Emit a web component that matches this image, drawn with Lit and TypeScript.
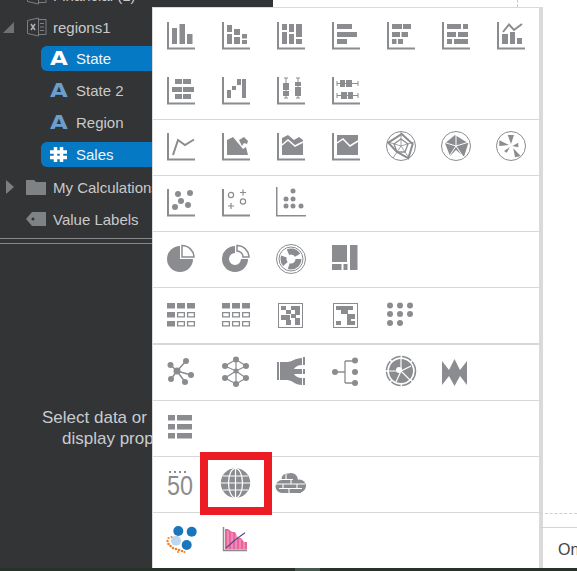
import { LitElement, html, css, svg, nothing } from 'lit';
import { customElement } from 'lit/decorators.js';

const GRAY = '#8a8c8f';

// x, y, w, h quadruples into a single path
const boxes = (...r: number[][]) => r.map(([x, y, w, h]) => `M${x} ${y}h${w}v${h}h${-w}z`).join('');
const axis = 'M0 0h2v25.5h26v2H0z';
const chart = (...r: number[][]) => svg`<path d="${axis + boxes(...r)}"/>`;
const dots = (...c: number[][]) => c.map(([x, y, r]) => svg`<circle cx="${x}" cy="${y}" r="${r}"/>`);
const line = (d: string, w = 2, color = GRAY) => svg`<path d="${d}" fill="none" stroke="${color}" stroke-width="${w}"/>`;

const SECTIONS = [
  [
    chart([5, 6, 5, 16], [12.5, 2, 5.5, 20], [20, 12, 5.5, 10]),
    chart([5, 3, 5, 7], [5, 12, 5, 10], [12, 7, 6, 6], [12, 15, 6, 7], [20, 12, 5, 4.5], [20, 18, 5, 4]),
    chart([5, 2, 5, 6], [5, 10, 5, 12], [12, 2, 5, 8], [12, 12, 5, 10], [19, 2, 6, 13], [19, 17, 6, 5]),
    chart([5, 2, 15, 5], [5, 10, 20, 5], [5, 17, 10, 5]),
    chart([5, 2, 10, 5], [16, 2, 8, 5], [5, 10, 8, 5], [14.5, 10, 6.5, 5], [5, 17, 4.5, 5], [11, 17, 5, 5]),
    chart([5, 2, 14, 5], [21, 2, 5, 5], [5, 10, 9, 5], [16, 10, 10, 5], [5, 17, 5, 5], [12, 17, 14, 5]),
    svg`${chart([5, 12, 6, 10], [13, 10, 5, 12], [20, 16, 5, 6])}${line('M6 10 12 2.5 17 8 25 2')}`,
    chart([8, 2, 7, 5], [16, 2, 8, 5], [5, 10, 10, 5], [16, 10, 11, 5], [8, 17, 7, 5], [16, 17, 8, 5]),
    chart([5, 13, 4, 8], [10, 9, 4, 4], [15, 2, 4, 6], [20, 2, 4, 19]),
    svg`${chart([6, 6, 6, 7], [6, 14, 6, 5], [18, 5, 6, 4], [18, 10, 6, 9])}
      ${line('M9 1v20M7 1h4M7 21h4M21 1v20M19 1h4M19 21h4', 1)}`,
    svg`${chart([8, 3, 5, 7], [14, 3, 6, 7], [9, 15, 6, 7], [16, 15, 5, 7])}
      ${line('M5 6.5h21M5 4v5M26 4v5M5 18.5h21M5 16v5M26 16v5', 1)}`,
  ],
  [
    svg`<path d="${axis}"/>${line('M6 22 11 7 18 12 27 6.5')}`,
    svg`<path d="${axis}"/><path d="M5 22V7l6-3 5 6 5 6 3-2 2 8z"/><path d="M17 7l5-3 4 4-1 3-3-1-2 3z"/>`,
    svg`<path d="${axis}"/><path d="M5 22V5l6-3 6 5 5-3 4 3v15z"/>${line('M5 12 11 7 18 13 26 9', 1.5, '#fff')}`,
    svg`<path d="${axis + boxes([5, 2, 21, 20])}"/>${line('M5 10 11 6 18 13 26 8', 1.5, '#fff')}`,
    svg`<circle cx="14" cy="13" r="14.5" fill="none" stroke="${GRAY}"/>
      ${line('M14 -1V13M14 13 1 9M14 13 27 9M14 13 6 25M14 13 22 25', .8)}
      <path d="M1.300 9.700 14.700 1 25.700 11 21.300 25.300 9.700 18.700z" fill="none" stroke="${GRAY}" stroke-width="2"/>
      <path d="M14 6 21 11 18 19 10 19 7 11z" fill="none" stroke="${GRAY}" stroke-width="1.300"/>`,
    svg`<circle cx="14" cy="13" r="14.5" fill="none" stroke="${GRAY}"/>
      <path d="M13 2 26.300 10.300 22 23.700 14 17 8 23 3 10.300z"/>
      ${line('M14 -1V13M14 13 1 9M14 13 27 9M14 13 6 25M14 13 22 25', 1, '#fff')}`,
    svg`<circle cx="14" cy="13" r="14.5" fill="none" stroke="${GRAY}"/>
      <path d="M10.700 2H17L14 11zM2.300 7.300V13L12 12zM21.300 9.700V14.300L15.300 13zM7 18 9.700 19.700 13 14zM16.300 15.300 23.700 23 18 24.300z"/>`,
  ],
  [
    svg`<path d="${axis}"/><g transform="translate(0,-1)">${dots([11, 6, 3], [23, 5, 3], [14, 13, 3], [21, 17, 3], [8, 19, 3])}</g>`,
    svg`<path d="${axis}"/><g transform="translate(0,-1)" fill="none" stroke="${GRAY}" stroke-width="1.2">
      <circle cx="9" cy="7" r="2.6"/><circle cx="21" cy="13.5" r="2.6"/>
      <path d="M21 1.5v6M18 4.5h6M9 15v6M6 18h6"/></g>`,
    svg`<g transform="translate(-1,-2)"><path d="M0 0h1.5v28H30v1.5H0z"/>
      ${dots([17, 4, 2.5], [10, 12, 2.5], [17, 12, 2.5], [10, 19, 2.5], [17, 19, 2.5], [25, 19, 2.5])}</g>`,
  ],
  [
    svg`<path d="M13 1A13 13 0 1 0 26 14H13z"/><path d="M15 .5A12 12 0 0 1 27 12H15z" fill="#fff" stroke="${GRAY}" stroke-width="1.5"/>`,
    svg`<path d="M13 1A13 13 0 1 0 26 14H19A6 6 0 1 1 13 8z"/>
      <path d="M15 .5A12 12 0 0 1 27 12H21A6 6 0 0 0 15 6z" fill="#fff" stroke="${GRAY}" stroke-width="1.5"/>`,
    svg`<g transform="translate(-1,0)"><circle cx="15" cy="14" r="14.5" fill="none" stroke="${GRAY}"/>
      <circle cx="15" cy="14" r="12" fill="none" stroke="${GRAY}"/>
      <circle cx="15" cy="14" r="7.5" fill="none" stroke="${GRAY}" stroke-width="6" stroke-dasharray="14 4 8 6 11 4"/></g>`,
    svg`<path d="${boxes([0, 0, 15, 17], [18, 0, 7.5, 25], [0, 19, 9.5, 6], [11.5, 19, 4, 6])}"/>`,
  ],
  [
    svg`<path d="${boxes([0, 2, 8, 5.5], [10, 2, 8, 5.5], [20, 2, 8, 5.5], [0, 11, 8, 5.5], [0, 20, 8, 5.5])}"/>
      <path d="${boxes([10.6, 11.6, 6.8, 4.3], [20.6, 11.6, 6.8, 4.3], [10.6, 20.6, 6.8, 4.3], [20.6, 20.6, 6.8, 4.3])}" fill="none" stroke="${GRAY}" stroke-width="1.3"/>`,
    svg`<path d="${boxes([0, 2, 8, 5.5], [10, 2, 8, 5.5], [20, 2, 8, 5.5])}"/>
      <path d="${boxes([.6, 11.6, 6.8, 4.3], [10.6, 11.6, 6.8, 4.3], [20.6, 11.6, 6.8, 4.3], [.6, 20.6, 6.8, 4.3], [10.6, 20.6, 6.8, 4.3], [20.6, 20.6, 6.8, 4.3])}" fill="none" stroke="${GRAY}" stroke-width="1.3"/>`,
    svg`<rect x="1.5" y="2.5" width="24" height="24" fill="none" stroke="${GRAY}"/>
      <path d="${boxes([4, 5, 5, 4], [14, 5, 9, 4], [9, 9, 5, 4], [18, 9, 5, 5], [14, 13, 5, 4], [4, 14, 9, 5], [9, 19, 5, 5], [18, 17, 5, 7])}"/>`,
    svg`<rect x="1.5" y="2.5" width="24" height="24" fill="none" stroke="${GRAY}"/>
      <path d="${boxes([4, 5, 17, 4], [9, 9, 7, 4], [15, 13, 8, 5], [15, 18, 4, 6], [4, 20, 5, 4], [19, 20, 4, 4])}"/>`,
    svg`<g transform="translate(0,2)">${dots([3, 2.5, 3], [13, 2.5, 3], [23, 2.5, 3], [3, 11, 3], [13, 11, 3], [23, 11, 3], [3, 20, 3], [13, 20, 3])}</g>`,
  ],
  [
    svg`<g transform="translate(0,-1)">${line('M10 14 3.5 8M10 14 19 4M10 14 24 18M10 14 18 25M10 14 4 22', 1.5)}
      ${dots([10, 14, 3.5], [3.5, 8, 3], [19, 4, 3], [24, 18, 3], [18, 25, 3], [4, 22, 3])}</g>`,
    svg`<g transform="translate(0,-1)">${line('M14 14 14 2.5 24 9 14 14 24 21 14 27M14 14 14 27 3 21 14 14 3 9 14 2.5', 1.2)}
      ${dots([14, 14, 2.5], [14, 2.5, 3], [24, 9, 3], [24, 21, 3], [14, 27, 3], [3, 21, 3], [3, 9, 3])}</g>`,
    svg`<g transform="translate(0,-1)"><path d="${boxes([0, 5, 2, 18], [26, 0, 2, 8], [26, 12, 2, 5], [26, 21, 2, 7])}"/>
      <path d="M3 5H10C15 5 18 1 25 1V8C21 8 18 10 17 12L25 12V17L17 17C18 19 21 21 25 21V28C18 28 15 23 10 23H3Z"/></g>`,
    svg`${line('M3 14H13M13 3V25M13 3H23M13 25H23', 1.3)}${dots([3, 14, 3], [23, 2.5, 3], [23, 14, 3], [23, 25, 3])}`,
    svg`<g transform="translate(-1,-1)"><circle cx="15" cy="14" r="14.5" fill="none" stroke="${GRAY}" stroke-width="1.5" stroke-dasharray="10 1.500"/>
      <circle cx="15" cy="14" r="12"/>
      ${line('M15 2V14L25 9M15 14 24 23M15 14 3 14M10 25 15 14', 1.2, '#fff')}
      <circle cx="13" cy="13" r="3" fill="#fff"/></g>`,
    svg`<path d="M0 3 7 12 12.5 1 18 12 25 3V27L18 18 12.5 28 7 18 0 27z"/>`,
  ],
  [
    svg`<path d="${boxes([1, 1, 7, 5.5], [10, 1, 15, 5.5], [1, 10, 7, 5.5], [10, 10, 15, 5.5], [1, 19, 7, 5.5], [10, 19, 15, 5.5])}"/>`,
  ],
  [
    svg`<path d="${boxes([2, 1, 2, 2], [7, 1, 2, 2], [12, 1, 2, 2], [17, 1, 2, 2])}"/>
      <text class="big" x="0" y="25" textLength="26" lengthAdjust="spacingAndGlyphs">50</text>`,
    svg`<circle cx="13.500" cy="13" r="14.700"/>
      <g fill="none" stroke="#fff" stroke-width="1.2">
        <ellipse cx="13.500" cy="13" rx="7" ry="14.700"/><path d="M13.500 -2V28M-1.500 13H28.500M1 6H26M1 20H26"/>
      </g>`,
    svg`<g>${dots([5, 16.500, 6.500], [14, 10, 7], [10, 9, 5.500], [22.500, 16, 6.500])}</g>
      <rect x="4" y="12" width="20" height="11"/>
      ${line('M4 9.500H16M-1 14H28M2 18.500H25M9 4V9.500M14 9.500V14M6 14V18.500M20 14V18.500M12 18.500V23', 1.100, '#fff')}`,
  ],
  [
    svg`<g fill="#1b75bb">${dots([11.300, 5, 5], [24.700, 5.700, 5], [19.700, 19, 5])}</g>
      <circle cx="9" cy="14.700" r="5" fill="#bcd7ee"/>
      <g fill="#f58220">${dots([1.500, 12, 1.100], [.5, 15, 1.200], [1.500, 18, 1.300], [3.500, 20, 1.300], [6, 22, 1.300], [9, 23, 1.300], [12, 24, 1.300], [15, 25, 1.300], [17.500, 26, 1.100], [4.500, 11, 1], [11, 26, 1])}</g>`,
    svg`<path d="M1.500 1V24.500H25" fill="none" stroke="${GRAY}" stroke-width="1.5"/>
      <path d="M3 3h3l4 3h3l3 6h3l3 4h3v7.500H3z" fill="#e9649a"/>
      ${line('M6 5V23M10 7V23M14 9V23M18 13V23M22 16V23', .8, '#f7c3d8')}
      ${line('M4 22 13 14 23 6.700', 1.2, '#5a4a8f')}`,
  ],
];

@customElement('app-root')
export class AppRoot extends LitElement {
  static styles = css`
    :host {
      display: block;
      width: 577px;
      height: 571px;
      overflow: hidden;
      font-family: 'Liberation Sans', Arial, sans-serif;
    }
    .page {
      position: relative;
      display: flex;
      flex-direction: column;
      height: 571px;
      background: #fff;
    }
    .main {
      flex: 1;
      display: flex;
      min-height: 0;
    }
    .status {
      height: 3px;
      background: linear-gradient(90deg, #26332b 295px, #46574d 295px, #46574d 320px, #26332b 320px);
    }

    /* left data panel */
    .panel {
      width: 152px;
      flex: none;
      background: #333436;
      overflow: hidden;
      color: #c9c9c9;
      font-size: 15px;
    }
    .tree {
      margin-top: -21px;
    }
    .row {
      display: flex;
      align-items: center;
      height: 32px;
      white-space: nowrap;
      position: relative;
    }
    .arrow {
      width: 26px;
      flex: none;
      display: flex;
      padding-left: 3px;
      box-sizing: border-box;
    }
    .node-icon {
      width: 27px;
      flex: none;
      display: flex;
    }
    .field {
      margin: 0 0 2px 41px;
      padding-left: 9px;
      height: 25px;
      flex: 1;
      display: flex;
      align-items: center;
      border-radius: 6px 0 0 6px;
    }
    .field.sel {
      background: #0679c5;
      color: #f4f4f4;
    }
    .glyph {
      width: 26px;
      flex: none;
      display: flex;
      align-items: center;
      font: bold 20px 'DejaVu Sans', sans-serif;
      color: #6a9ecd;
      line-height: 25px;
    }
    .glyph span {
      display: inline-block;
      transform: scaleX(1.15);
      transform-origin: left center;
    }
    .sel .glyph {
      color: #fff;
    }
    .rule {
      margin-top: 3px;
      border-top: 1px solid #85878a;
      border-bottom: 1px solid #85878a;
      height: 4px;
    }
    .prompt {
      margin: 163px 0 0 42px;
      font-size: 17px;
      line-height: 21px;
      color: #c8ccd0;
      white-space: nowrap;
    }
    .prompt div + div {
      margin-left: 20px;
    }

    /* centre column: strip of dark header, then the picker menu */
    .centre {
      width: 391px;
      flex: none;
      display: flex;
      flex-direction: column;
    }
    .strip {
      height: 7px;
      flex: none;
      display: flex;
    }
    .strip .dark {
      width: 121px;
      background: #333436;
    }
    .strip .tick {
      margin-left: 244px;
      height: 7px;
      border-left: 1px dashed #c9c9c9;
    }
    .menu {
      flex: 1;
      background: #fff;
      border: solid #dadada;
      border-width: 1px 4px 0 1px;
    }
    .section {
      display: grid;
      grid-template-columns: repeat(7, 55px);
      grid-auto-rows: 55px;
      border-bottom: 1px solid #d8d8d8;
    }
    .section.first {
      padding-top: 1px;
    }
    .section.heavy {
      border-bottom-width: 2px;
    }
    .section:last-child {
      border-bottom: 0;
    }
    .cell {
      padding: 13px 0 0 14px;
    }
    .cell svg {
      display: block;
      overflow: visible;
      fill: #8a8c8f;
    }
    .big {
      font: 27px 'Liberation Sans', sans-serif;
      fill: #8a8c8f;
    }
    .mark {
      position: absolute;
      left: 200px;
      top: 452px;
      width: 72px;
      height: 63px;
      box-sizing: border-box;
      border: 8px solid #ed1c24;
    }

    /* what shows of the canvas on the right */
    .canvas {
      flex: 1;
      min-width: 0;
      padding-top: 513px;
    }
    .dash {
      margin-left: -3px;
      border-top: 1px dashed #cfcfcf;
      height: 13px;
    }
    .solid {
      margin-left: -3px;
      border-top: 1px solid #d4d4d4;
      padding: 13px 0 0 18px;
      font-size: 16px;
      color: #444;
      white-space: nowrap;
    }
  `;

  private renderField(label: string, glyph: unknown, selected = false) {
    return html`<div class="row">
      <div class="field ${selected ? 'sel' : ''}">
        <span class="glyph">${glyph}</span>${label}
      </div>
    </div>`;
  }

  private renderBranch(arrow: unknown, icon: unknown, label: string) {
    return html`<div class="row">
      <span class="arrow">${arrow ?? nothing}</span>
      <span class="node-icon">${icon}</span>${label}
    </div>`;
  }

  private renderPanel() {
    const open = html`<svg width="12" height="12"><path d="M0 12H11V1z" fill="#6f7275"/></svg>`;
    const shut = html`<svg width="12" height="16"><path d="M3 1l8 7-8 7z" fill="#7c7f82"/></svg>`;
    const excel = html`<svg width="21" height="20" fill="none" stroke="#7c7f82">
      <path d="M1.500 3.500 12.500 1V19L1.500 16.500z"/>
      <path d="M12.500 2.500H20V17.500H12.500M14 6.500h4M14 10h4M14 13.500h4" />
      <path d="M5 7l4 6M9 7l-4 6" stroke="#b0b2b4" stroke-width="1.500"/>
    </svg>`;
    const folder = html`<svg width="21" height="16"><path d="M0 1h8l2 2h10v13H0z" fill="#7f8285"/></svg>`;
    const tag = html`<svg width="21" height="16"><path fill="#7f8285" fill-rule="evenodd" d="M6 1H20V15H6L0 8zM7 6.500a1.500 1.500 0 1 0 .01 0z"/></svg>`;
    const letter = html`<span>A</span>`;
    const hash = html`<svg width="17" height="15" fill="none" stroke="currentColor" stroke-width="3.500">
      <path d="M5.500 0V15M11.500 0V15M0 5H17M0 10.500H17"/>
    </svg>`;
    return html`<aside class="panel">
      <div class="tree">
        ${this.renderBranch(nothing, excel, 'Financial (1)')}
        ${this.renderBranch(open, excel, 'regions1')}
        ${this.renderField('State', letter, true)}
        ${this.renderField('State 2', letter)}
        ${this.renderField('Region', letter)}
        ${this.renderField('Sales', hash, true)}
        ${this.renderBranch(shut, folder, 'My Calculations')}
        ${this.renderBranch(nothing, tag, 'Value Labels')}
      </div>
      <div class="rule"></div>
      <div class="prompt">
        <div>Select data or</div>
        <div>display properties</div>
      </div>
    </aside>`;
  }

  render() {
    return html`<div class="page">
      <div class="main">
        ${this.renderPanel()}
        <div class="centre">
          <div class="strip"><div class="dark"></div><div class="tick"></div></div>
          <div class="menu">
            ${SECTIONS.map((icons, i) => html`
              <div class="section ${i === 0 ? 'first' : ''} ${i === 4 ? 'heavy' : ''}">
                ${icons.map((icon) => html`<div class="cell">
                  <svg width="28" height="28" viewBox="0 0 28 28">${icon}</svg>
                </div>`)}
              </div>`)}
          </div>
        </div>
        <div class="canvas">
          <div class="dash"></div>
          <div class="solid">On</div>
        </div>
      </div>
      <div class="status"></div>
      <div class="mark"></div>
    </div>`;
  }
}
